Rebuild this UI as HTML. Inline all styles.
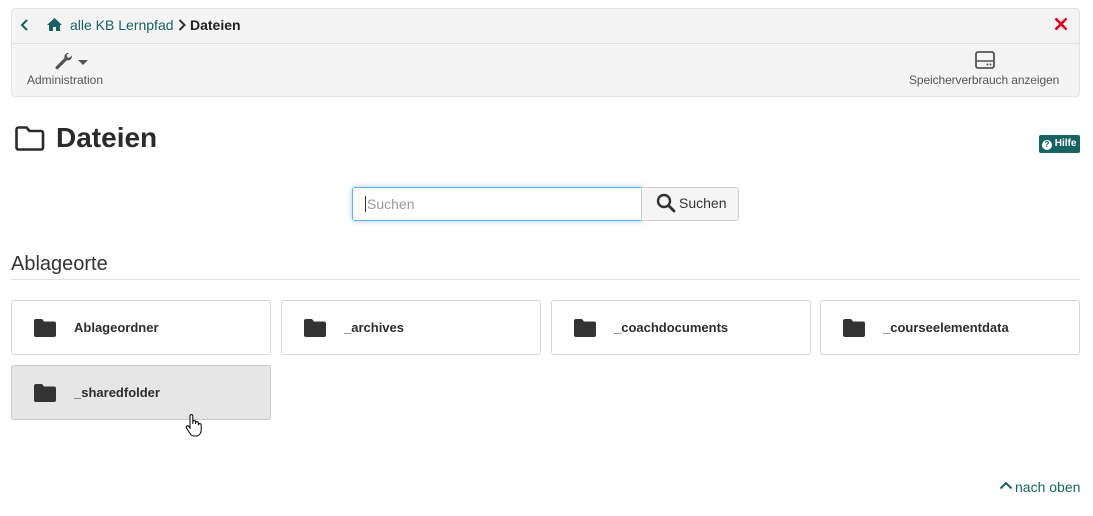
<!DOCTYPE html>
<html><head><meta charset="utf-8"><style>
*{box-sizing:border-box}
body{margin:0;width:1093px;height:516px;background:#fff;font-family:"Liberation Sans",Arial,sans-serif;color:#333;position:relative;overflow:hidden}
.abs{position:absolute}
.bar{left:11px;top:8px;width:1069px;height:89px;background:#f4f4f4;border:1px solid #e3e3e3;border-radius:4px}
.sep{left:0;top:34px;width:100%;height:1px;background:#e0e0e0}
.card{position:absolute;width:260px;height:55px;border:1px solid #d6d6d6;border-radius:3px;background:#fff}
.card .fi{position:absolute;left:22px;top:18px}
.card span{position:absolute;left:62px;top:19px;font-weight:bold;font-size:13px;color:#2d2d2d}
</style></head><body>
<div class="abs bar">
  <svg class="abs" style="left:8px;top:9px" width="10" height="14" viewBox="0 0 10 14"><path d="M7 2L2 7l5 5" stroke="#1c5f5c" stroke-width="2" fill="none"/></svg>
  <svg class="abs" style="left:34px;top:8px" width="17" height="15" viewBox="0 0 17 15"><path d="M8.5 1L1 8h2v6h4v-4h3v4h4V8h2z" fill="#176363"/></svg>
  <div class="abs" style="left:58px;top:8px;font-size:14px;color:#176363">alle KB Lernpfad</div>
  <svg class="abs" style="left:166px;top:10px" width="8" height="12" viewBox="0 0 8 12"><path d="M1.5 1l5 5-5 5" stroke="#333" stroke-width="2" fill="none"/></svg>
  <div class="abs" style="left:178px;top:8px;font-size:14px;font-weight:bold;color:#222">Dateien</div>
  <svg class="abs" style="left:1042px;top:8px" width="14" height="14" viewBox="0 0 14 14"><path d="M1.5 1.5l11 11M12.5 1.5l-11 11" stroke="#e0001a" stroke-width="2.6"/></svg>
  <div class="abs sep"></div>
  <svg class="abs" style="left:42px;top:43px" width="20" height="18" viewBox="0 0 20 18"><path d="M15 1a4 4 0 0 0-4.5 5L2 14.5a1.6 1.6 0 0 0 2.3 2.3L12.8 8.3A4 4 0 0 0 17.8 3.5l-2.3 2.3-2.2-.6-.6-2.2L15 1z" fill="#555"/></svg>
  <svg class="abs" style="left:66px;top:51px" width="10" height="6"><path d="M0 0h10L5 5z" fill="#555"/></svg>
  <div class="abs" style="left:15px;top:64px;font-size:12px;color:#555">Administration</div>
  <svg class="abs" style="left:963px;top:42px" width="20" height="18" viewBox="0 0 20 18"><rect x="1" y="1" width="18" height="16" rx="2" fill="none" stroke="#555" stroke-width="1.8"/><path d="M1 10h18" stroke="#555" stroke-width="1.6"/><circle cx="12.5" cy="13.5" r="1" fill="#555"/><circle cx="15.5" cy="13.5" r="1" fill="#555"/></svg>
  <div class="abs" style="left:897px;top:64px;font-size:12px;color:#555;letter-spacing:-0.1px">Speicherverbrauch anzeigen</div>
</div>
<svg class="abs" style="left:14px;top:125px" width="32" height="27" viewBox="0 0 32 27"><path d="M2.5 4.5a2 2 0 0 1 2-2h8l3 3.5h11.5a2 2 0 0 1 2 2v14.5a2 2 0 0 1-2 2h-22.5a2 2 0 0 1-2-2z" fill="none" stroke="#2b2b2b" stroke-width="2.6" stroke-linejoin="round"/></svg>
<div class="abs" style="left:56px;top:122px;font-size:28px;font-weight:bold;color:#2b2b2b">Dateien</div>
<div class="abs" style="left:1039px;top:135px;width:41px;height:18px;background:#176363;border-radius:2px;color:#fff;font-size:10px;font-weight:bold;line-height:18px;padding-left:3px"><span style="display:inline-block;width:10px;height:10px;border-radius:50%;background:#fff;color:#176363;font-size:8px;line-height:10px;text-align:center;vertical-align:-1px">?</span> Hilfe</div>
<div class="abs" style="left:352px;top:187px;width:290px;height:34px;border:1px solid #66afe9;border-radius:3px 0 0 3px;box-shadow:0 0 6px rgba(102,175,233,.6)"></div>
<div class="abs" style="left:365px;top:196px;font-size:14px;color:#999;border-left:1px solid #333;padding-left:1px;line-height:16px">Suchen</div>
<div class="abs" style="left:641px;top:187px;width:98px;height:34px;border:1px solid #ccc;border-radius:0 3px 3px 0;background:#f5f5f5"></div>
<svg class="abs" style="left:656px;top:193px" width="20" height="20" viewBox="0 0 20 20"><circle cx="8" cy="8" r="6" fill="none" stroke="#333" stroke-width="2.4"/><path d="M12.5 12.5l5.5 5.5" stroke="#333" stroke-width="2.8" stroke-linecap="round"/></svg>
<div class="abs" style="left:679px;top:195px;font-size:14px;color:#333">Suchen</div>
<div class="abs" style="left:11px;top:253px;font-size:20px;color:#333">Ablageorte</div>
<div class="abs" style="left:11px;top:279px;width:1069px;height:1px;background:#e3e3e3"></div>
<div class="card" style="left:11px;top:300px"><svg class="fi" width="22" height="18" viewBox="0 0 22 18"><path d="M0 2a2 2 0 0 1 2-2h6l2 2.5h10a2 2 0 0 1 2 2V16a2 2 0 0 1-2 2H2a2 2 0 0 1-2-2z" fill="#333"/></svg><span>Ablageordner</span></div>
<div class="card" style="left:281px;top:300px"><svg class="fi" width="22" height="18" viewBox="0 0 22 18"><path d="M0 2a2 2 0 0 1 2-2h6l2 2.5h10a2 2 0 0 1 2 2V16a2 2 0 0 1-2 2H2a2 2 0 0 1-2-2z" fill="#333"/></svg><span>_archives</span></div>
<div class="card" style="left:551px;top:300px"><svg class="fi" width="22" height="18" viewBox="0 0 22 18"><path d="M0 2a2 2 0 0 1 2-2h6l2 2.5h10a2 2 0 0 1 2 2V16a2 2 0 0 1-2 2H2a2 2 0 0 1-2-2z" fill="#333"/></svg><span>_coachdocuments</span></div>
<div class="card" style="left:820px;top:300px"><svg class="fi" width="22" height="18" viewBox="0 0 22 18"><path d="M0 2a2 2 0 0 1 2-2h6l2 2.5h10a2 2 0 0 1 2 2V16a2 2 0 0 1-2 2H2a2 2 0 0 1-2-2z" fill="#333"/></svg><span>_courseelementdata</span></div>
<div class="card" style="left:11px;top:365px;background:#e6e6e6;border-color:#c8c8c8"><svg class="fi" width="22" height="18" viewBox="0 0 22 18"><path d="M0 2a2 2 0 0 1 2-2h6l2 2.5h10a2 2 0 0 1 2 2V16a2 2 0 0 1-2 2H2a2 2 0 0 1-2-2z" fill="#333"/></svg><span>_sharedfolder</span></div>
<svg class="abs" style="left:185px;top:414px" width="18" height="24" viewBox="0 0 18 24"><path d="M5 2a1.4 1.4 0 0 1 2.8 0v8V8a1.4 1.4 0 0 1 2.8 0v2-1a1.4 1.4 0 0 1 2.8 0v2a1.4 1.4 0 0 1 2.8 0v5c0 3-2 6-5 6H9c-2 0-3-1-4-2.5L1.5 14a1.4 1.4 0 0 1 2.2-1.7L5 14z" fill="#fff" stroke="#000" stroke-width="1"/></svg>
<svg class="abs" style="left:999px;top:481px" width="14" height="9" viewBox="0 0 14 9"><path d="M1.5 7.5L7 2l5.5 5.5" stroke="#176363" stroke-width="2" fill="none"/></svg>
<div class="abs" style="left:1015px;top:479px;font-size:14px;color:#176363">nach oben</div>
</body></html>
